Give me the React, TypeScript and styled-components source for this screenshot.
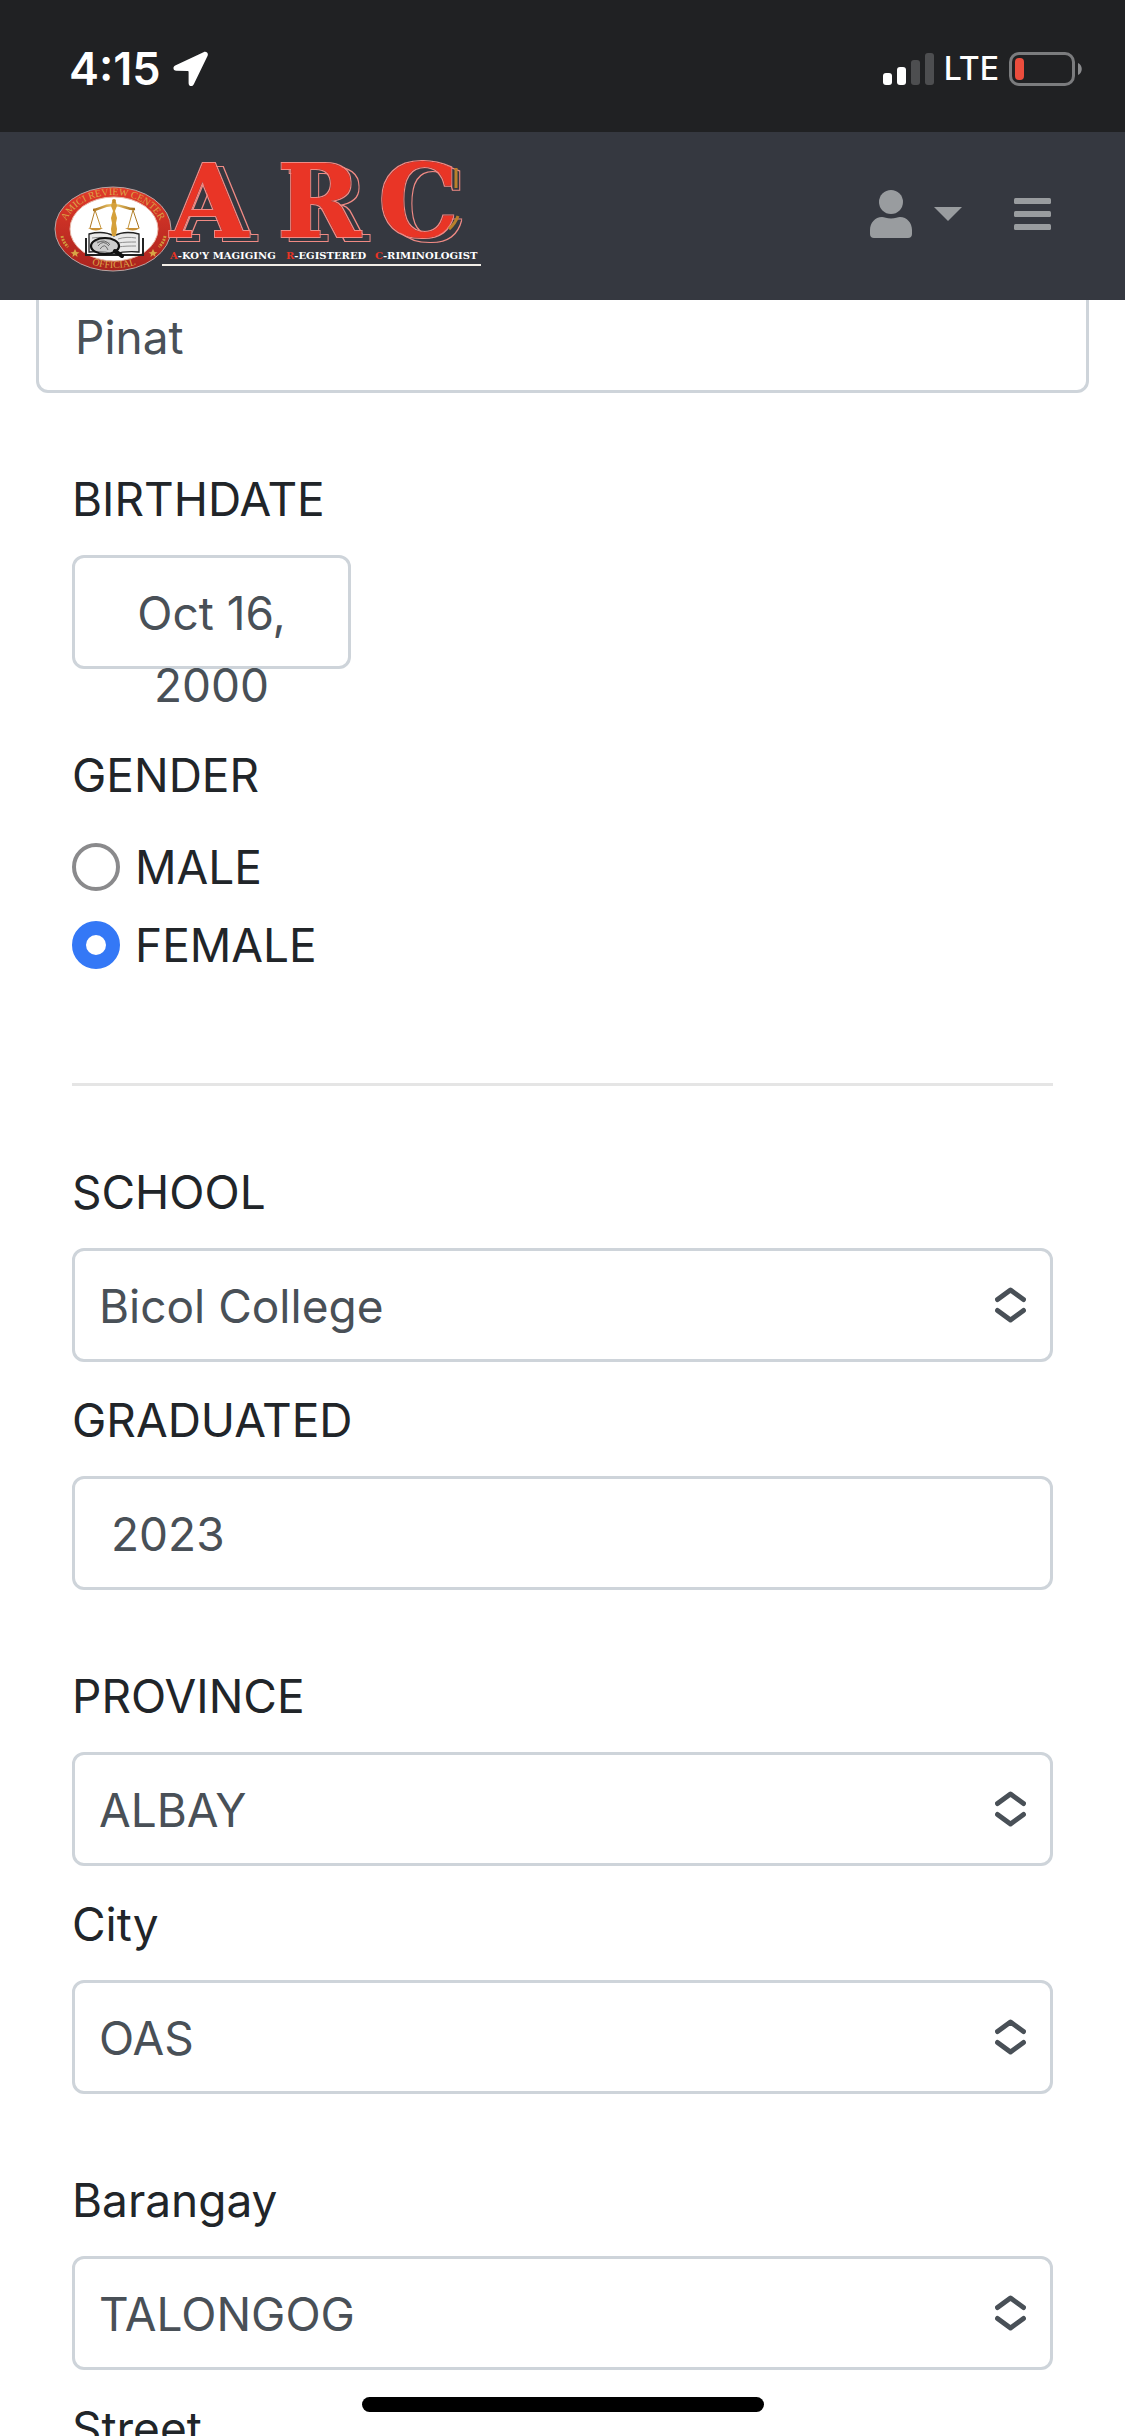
import React, { useState } from 'react';
import styled, { createGlobalStyle } from 'styled-components';

const GlobalStyle = createGlobalStyle`
  *, *::before, *::after { box-sizing: border-box; }
  body { margin: 0; background: #fff; }
  body, button, input, select {
    font-family: Inter, "Liberation Sans", sans-serif;
    font-size: 46px;
    line-height: 72px;
  }
`;

const Screen = styled.div`
  display: flex;
  flex-direction: column;
  height: 100vh;
  overflow: hidden;
  color: #212529;
`;

const StatusBar = styled.div`
  position: relative;
  z-index: 1;
  flex: none;
  display: flex;
  align-items: center;
  justify-content: space-between;
  height: 132px;
  padding: 6px 42px 0 69px;
  background: #202123;
  color: #fff;
`;

const StatusGroup = styled.div<{ $gap: number }>`
  display: flex;
  align-items: center;
  gap: ${(p) => p.$gap}px;
`;

const Clock = styled.span`
  font-size: 45px;
  font-weight: 600;
`;

const Network = styled.span`
  font-size: 32px;
  font-weight: 500;
`;

const NavBar = styled.header`
  position: relative;
  z-index: 1;
  flex: none;
  display: flex;
  align-items: center;
  justify-content: space-between;
  height: 168px;
  padding: 0 74px 4px 50px;
  background: #353840;
`;

const Brand = styled.a`
  display: flex;

  > svg { overflow: visible; }
`;

const NavActions = styled.div`
  display: flex;
  align-items: center;
  gap: 52px;
`;

const IconButton = styled.button`
  display: flex;
  align-items: center;
  gap: 22px;
  padding: 0;
  border: 0;
  background: none;
  color: #999c9f;
`;

const Form = styled.form`
  flex: 1;
  min-height: 0;
  display: flex;
  flex-direction: column;
  padding: 0 36px;
`;

const Section = styled.div`
  flex: none;
  padding: 0 36px;
`;

const Field = styled.div<{ $spaced?: boolean }>`
  padding-top: ${(p) => (p.$spaced ? 70 : 22)}px;
`;

const Label = styled.label`
  display: block;
  margin-bottom: 20px;
`;

const Group = styled.fieldset`
  margin: 0;
  padding: 70px 0 0;
  border: 0;
`;

const Legend = styled.legend`
  float: left;
  width: 100%;
  margin-bottom: 20px;
  padding: 0;
`;

const control = `
  display: block;
  width: 100%;
  height: 114px;
  margin: 0;
  border: 3px solid #ced4da;
  border-radius: 12px;
  background: #fff;
  color: #495057;
`;

const TextInput = styled.input`
  ${control}
  padding: 19px 36px 17px;
`;

/* Scrolled partly beneath the navigation bar. */
const ScrolledInput = styled(TextInput)`
  flex: none;
  margin-top: -21px;
`;

const DateButton = styled.button`
  ${control}
  display: flex;
  align-items: flex-start;
  justify-content: center;
  width: 279px;
  padding: 19px 36px 17px;
  text-align: center;
`;

const SelectShell = styled.div`
  display: grid;
  align-items: center;

  > * { grid-area: 1 / 1; }
  > svg { justify-self: end; margin-right: 27px; pointer-events: none; }
`;

const Select = styled.select`
  ${control}
  appearance: none;
  padding: 2px 72px 0 24px;
`;

const RadioRow = styled.label`
  display: flex;
  align-items: center;
  gap: 15px;
  clear: both;
  margin-bottom: 6px;
`;

const Radio = styled.input`
  appearance: none;
  width: 48px;
  height: 48px;
  margin: 0;
  border: 4px solid #8a8a8c;
  border-radius: 50%;
  background: #fff;

  &:checked { border: 14px solid #3478f6; }
`;

const Divider = styled.hr`
  height: 3px;
  margin: 96px 0 0;
  border: 0;
  background: #e5e5e5;
`;

const HomeIndicator = styled.div`
  position: fixed;
  bottom: 24px;
  left: 50%;
  width: 402px;
  height: 15px;
  margin-left: -201px;
  border-radius: 8px;
  background: #000;
`;

const LocationArrow = () => (
  <svg width="36" height="36" viewBox="0 0 36 36" fill="#fff" aria-hidden="true">
    <path d="M30.5 1.2 2.2 14.6C-.6 16 .2 19.6 3.2 19.7L14.5 19.9C15.3 19.9 15.6 20.2 15.6 21V32.2C15.7 35.5 19.4 36.2 20.8 33.3L34.5 5C35.8 2.2 33.3 0 30.5 1.2Z" />
  </svg>
);

const SignalBars = () => (
  <svg width="51" height="32" viewBox="0 0 51 32" aria-hidden="true">
    <rect x="0" y="20" width="9" height="12" rx="3" fill="#fff" />
    <rect x="14" y="14" width="9" height="18" rx="3" fill="#fff" />
    <rect x="28" y="7" width="9" height="25" rx="3" fill="#4d4e50" />
    <rect x="42" y="0" width="9" height="32" rx="3" fill="#4d4e50" />
  </svg>
);

const Battery = () => (
  <svg width="74" height="34" viewBox="0 0 74 34" aria-hidden="true">
    <rect x="1.5" y="1.5" width="63" height="31" rx="8.5" fill="none" stroke="#7b7c7e" strokeWidth="3" />
    <rect x="6" y="6" width="9" height="22" rx="4" fill="#eb4d3d" />
    <path d="M69 11c5 2 5 10 0 12z" fill="#8a8b8d" />
  </svg>
);

const UserIcon = () => (
  <svg width="42" height="48" viewBox="0 0 42 48" fill="currentColor" aria-hidden="true">
    <circle cx="21" cy="12" r="12" />
    <path d="M12 27c2 0 5 1.5 9 1.5S28 27 30 27c7 0 12 6 12 13v4c0 2.500-1.500 4-4 4H4c-2.500 0-4-1.500-4-4v-4c0-7 5-13 12-13Z" />
  </svg>
);

const Caret = () => (
  <svg width="28" height="14" viewBox="0 0 28 14" fill="currentColor" aria-hidden="true">
    <path d="M0 0h28L14 14z" />
  </svg>
);

const MenuIcon = () => (
  <svg width="37" height="32" viewBox="0 0 37 32" fill="currentColor" aria-hidden="true">
    <rect width="37" height="6" rx="1.500" />
    <rect y="13" width="37" height="6" rx="1.500" />
    <rect y="26" width="37" height="6" rx="1.500" />
  </svg>
);

const Chevrons = () => (
  <svg width="31" height="36" viewBox="0 0 31 36" fill="none" stroke="#495057" strokeWidth="5" strokeLinecap="round" strokeLinejoin="round" aria-hidden="true">
    <path d="M2.500 12.500 15.500 3l13 9.500M2.500 23.500l13 9.500 13-9.500" />
  </svg>
);

const Logo = () => (
  <svg width="435" height="126" viewBox="50 151 435 126" role="img" aria-label="ARC">
    <defs>
      <linearGradient id="ring" x1="0" y1="0" x2="0" y2="1">
        <stop offset="0" stopColor="#e23a2a" />
        <stop offset="1" stopColor="#a9231e" />
      </linearGradient>
      <linearGradient id="gold" x1="0" y1="0" x2="1" y2="0">
        <stop offset="0" stopColor="#a8701c" />
        <stop offset=".5" stopColor="#f2cf72" />
        <stop offset="1" stopColor="#a06a18" />
      </linearGradient>
      <path id="ringTop" d="M63 235A50 40 0 0 1 163 235" />
      <path id="ringBottom" d="M76 256A52 38 0 0 0 152 256" />
      {/* Thin outline of the letters, cast down and to the right */}
      <filter id="inline" x="-10%" y="-10%" width="125%" height="125%">
        <feMorphology in="SourceAlpha" operator="dilate" radius="1" result="wide" />
        <feComposite in="wide" in2="SourceAlpha" operator="out" result="edge" />
        <feFlood floodColor="#f08a84" />
        <feComposite in2="edge" operator="in" result="pink" />
        <feOffset in="pink" dx="8" dy="4" result="cast" />
        <feMerge>
          <feMergeNode in="cast" />
          <feMergeNode in="pink" />
          <feMergeNode in="SourceGraphic" />
        </feMerge>
      </filter>
    </defs>

    <ellipse cx="113" cy="229" rx="58" ry="42" fill="url(#ring)" stroke="#b9a5a3" strokeWidth="1" />
    <ellipse cx="114" cy="229" rx="44" ry="32" fill="#fff" stroke="#e8b9a8" strokeWidth="1" />
    <g fill="#dba548" fontFamily='"Liberation Serif", serif' fontSize="10">
      <text textAnchor="middle"><textPath href="#ringTop" startOffset="50%">AMICI REVIEW CENTER</textPath></text>
      <text textAnchor="middle"><textPath href="#ringBottom" startOffset="50%">OFFICIAL</textPath></text>
    </g>
    <g stroke="#cf9a3c" strokeWidth="3" strokeDasharray="2 1" fill="none">
      <path d="M62 236q1 6 6 11" />
      <path d="M165 236q-1 6-6 11" />
    </g>
    <g fill="#d8a545">
      <path d="m75 249 1.500 3 3 .5-2.500 1.500.5 3-2.500-2-2.500 2 .5-3-2.500-1.500 3-.5zM153 249l1.500 3 3 .5-2.500 1.500.5 3-2.500-2-2.500 2 .5-3-2.500-1.500 3-.5z" />
    </g>

    <g stroke="#222" strokeWidth="1.300" fill="#e9e9e9">
      <path d="M89 234c8-2 18-2 25 2 7-4 17-4 25-2v18c-9-1-18 0-25 2-7-2-16-3-25-2z" />
      <path d="M86 238v17h57v-17" fill="none" strokeWidth="2" />
      <path d="M92 238c7-1 13-1 19 1M92 242c6-1 12 0 18 1M118 239c6-2 12-2 18-1M118 243c6-1 12-1 18-1M118 247c6-1 12-1 18-1" strokeWidth=".8" stroke="#777" fill="none" />
    </g>
    <g fill="none" stroke="url(#gold)">
      <path d="M93 210c6 0 9-5 20-5s15 5 22 4" strokeWidth="2.500" />
      <path d="m95 210-5 18M95 210l6 18M133 210l-5 18M133 210l6 18" strokeWidth="1" />
    </g>
    <path d="M112 202h4l1 4-2 5 2 7-1 5 1 6-1 7h-4l-1-7 1-6-1-5 2-7-2-5z" fill="#d5a03a" />
    <circle cx="114" cy="201" r="2" fill="#c58d2a" />
    <path d="M88 228h15q-7 5-15 0M125 228h15q-7 5-15 0" fill="#c99238" />
    <ellipse cx="105" cy="246" rx="14" ry="8" fill="#bbb" fillOpacity=".6" stroke="#111" strokeWidth="2.200" />
    <path d="M98 246q5-7 11 0M100 249q5-7 8 1M97 243q8-5 13 2" stroke="#555" strokeWidth=".8" fill="none" />
    <path d="m115 251 7 5" stroke="#111" strokeWidth="4" strokeLinecap="round" />

    <g fill="#e93425" fontFamily='"DejaVu Serif", serif' fontWeight="700" fontSize="101" filter="url(#inline)">
      <text x="170" y="237">A</text>
      <text x="277" y="237">R</text>
      <text x="378" y="237">C</text>
    </g>
    <path d="M456 168v20M458 216q-3 8-9 13" stroke="#b9802b" strokeWidth="3" fill="none" />

    <g fill="#fff" fontFamily='"DejaVu Serif", serif' fontWeight="700" fontSize="10">
      <text x="170" y="259"><tspan fill="#e93425">A</tspan>-KO'Y MAGIGING</text>
      <text x="286" y="259"><tspan fill="#e93425">R</tspan>-EGISTERED</text>
      <text x="375" y="259"><tspan fill="#e93425">C</tspan>-RIMINOLOGIST</text>
    </g>
    <rect x="162" y="264" width="319" height="2" fill="#f3efe8" />
  </svg>
);

interface SelectFieldProps {
  id: string;
  label: string;
  options: string[];
  spaced?: boolean;
}

const SelectField = ({ id, label, options, spaced }: SelectFieldProps) => (
  <Field $spaced={spaced}>
    <Label htmlFor={id}>{label}</Label>
    <SelectShell>
      <Select id={id}>
        {options.map((option) => <option key={option}>{option}</option>)}
      </Select>
      <Chevrons />
    </SelectShell>
  </Field>
);

export default function App() {
  const [gender, setGender] = useState('FEMALE');

  return (
    <Screen>
      <GlobalStyle />
      <StatusBar>
        <StatusGroup $gap={12}>
          <Clock>4:15</Clock>
          <LocationArrow />
        </StatusGroup>
        <StatusGroup $gap={10}>
          <SignalBars />
          <Network>LTE</Network>
          <Battery />
        </StatusGroup>
      </StatusBar>
      <NavBar>
        <Brand href="#"><Logo /></Brand>
        <NavActions>
          <IconButton type="button" aria-label="Account"><UserIcon /><Caret /></IconButton>
          <IconButton type="button" aria-label="Menu"><MenuIcon /></IconButton>
        </NavActions>
      </NavBar>
      <Form>
        <ScrolledInput aria-label="Last name" defaultValue="Pinat" />
        <Section>
          <Field $spaced>
            <Label htmlFor="birthdate">BIRTHDATE</Label>
            <DateButton id="birthdate" type="button">Oct 16, 2000</DateButton>
          </Field>
          <Group>
            <Legend>GENDER</Legend>
            {['MALE', 'FEMALE'].map((value) => (
              <RadioRow key={value}>
                <Radio
                  type="radio"
                  name="gender"
                  value={value}
                  checked={gender === value}
                  onChange={() => setGender(value)}
                />
                {value}
              </RadioRow>
            ))}
          </Group>
          <Divider />
          <SelectField id="school" label="SCHOOL" options={['Bicol College']} spaced />
          <Field>
            <Label htmlFor="graduated">GRADUATED</Label>
            <TextInput id="graduated" inputMode="numeric" defaultValue="2023" />
          </Field>
          <SelectField id="province" label="PROVINCE" options={['ALBAY']} spaced />
          <SelectField id="city" label="City" options={['OAS']} />
          <SelectField id="barangay" label="Barangay" options={['TALONGOG']} spaced />
          <Field>
            <Label htmlFor="street">Street</Label>
            <TextInput id="street" />
          </Field>
        </Section>
      </Form>
      <HomeIndicator />
    </Screen>
  );
}
